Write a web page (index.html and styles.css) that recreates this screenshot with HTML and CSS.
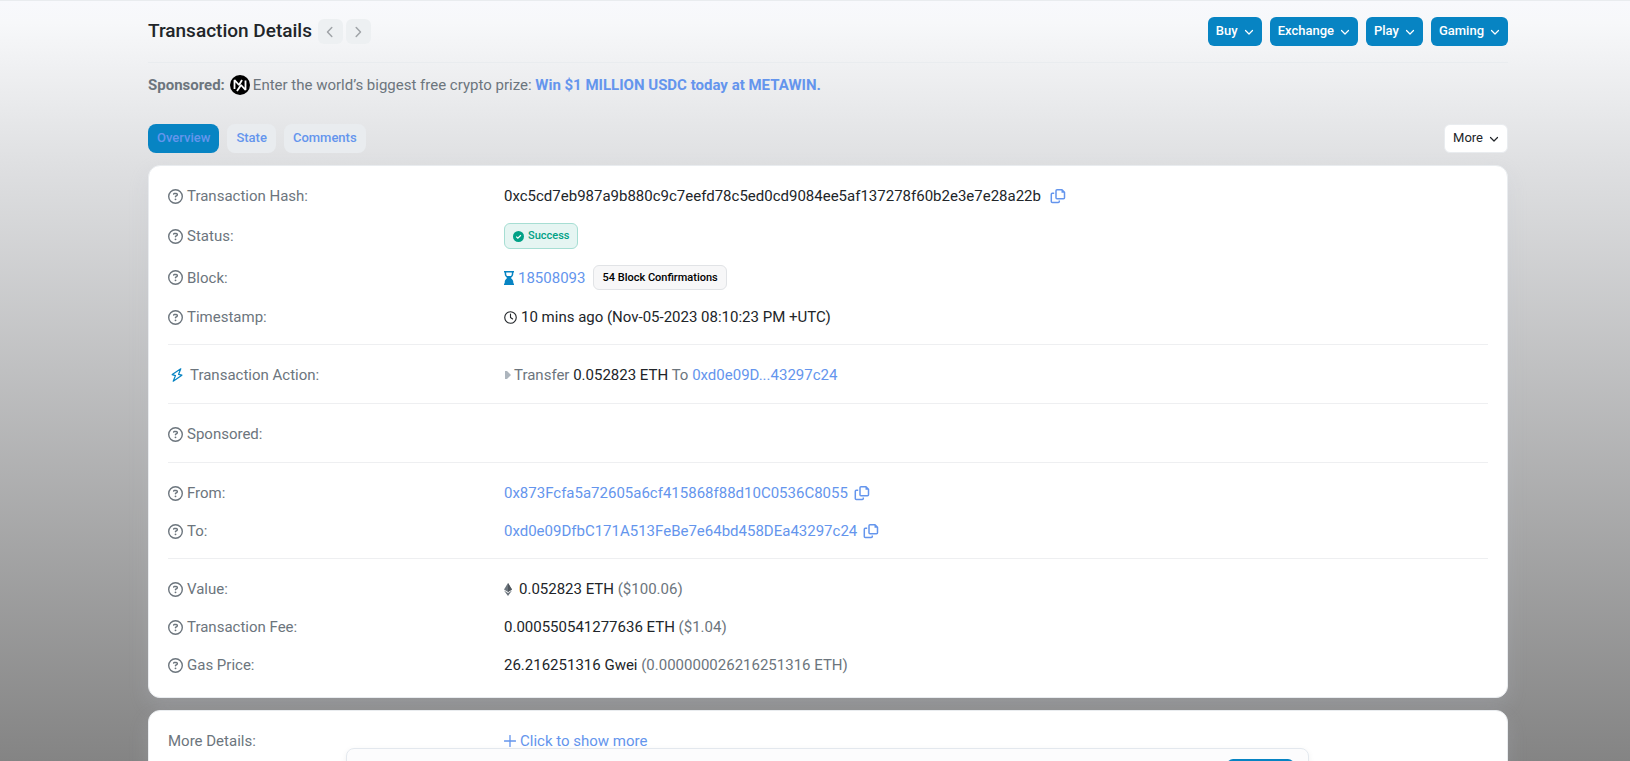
FILE: index.html
```
<!DOCTYPE html>
<html lang="en">
<head>
<meta charset="utf-8">
<title>Transaction Details</title>
<link rel="stylesheet" href="styles.css">
</head>
<body>
<svg class="sprite" aria-hidden="true">
  <symbol id="help" viewBox="0 0 512 512"><path fill="currentColor" d="M464 256A208 208 0 1 0 48 256a208 208 0 1 0 416 0zM0 256a256 256 0 1 1 512 0A256 256 0 1 1 0 256zm169.800-90.700c7.900-22.300 29.100-37.300 52.800-37.300h58.300c34.900 0 63.100 28.300 63.100 63.100c0 22.600-12.100 43.500-31.700 54.800L280 264.400c-.2 13-10.900 23.600-24 23.600c-13.300 0-24-10.700-24-24V250.500c0-8.600 4.600-16.500 12.100-20.800l44.300-25.400c4.700-2.700 7.600-7.700 7.600-13.100c0-8.400-6.800-15.100-15.100-15.100H222.600c-3.400 0-6.400 2.100-7.500 5.300l-.4 1.200c-4.400 12.500-18.200 19-30.600 14.600s-19-18.200-14.600-30.600l.4-1.200zM224 352a32 32 0 1 1 64 0 32 32 0 1 1 -64 0z"/></symbol>
  <symbol id="chevron" viewBox="0 0 10 10"><path d="M1.500 3.500 5 7l3.500-3.500" fill="none" stroke="currentColor" stroke-width="1.200" stroke-linecap="round" stroke-linejoin="round"/></symbol>
  <symbol id="copy" viewBox="0 0 16 16"><g fill="none" stroke="currentColor" stroke-width="1.500" stroke-linejoin="round"><path d="M7 1.700h5l2.500 2.500v5.600a1 1 0 0 1-1 1H7a1 1 0 0 1-1-1V2.700a1 1 0 0 1 1-1z"/><path d="M4.200 5.200H2.300a1 1 0 0 0-1 1v7.300a1 1 0 0 0 1 1h6a1 1 0 0 0 1-1v-1"/></g><path d="M11.500 1.500v3.200h3.200z" fill="currentColor"/></symbol>
</svg>
<div class="page">
  <header class="header">
    <h1 class="title">Transaction Details</h1>
    <div class="pager">
      <button class="pager-btn" aria-label="Previous transaction"><svg viewBox="0 0 12 12"><path d="M7.800 1.500 3.500 6l4.300 4.500"/></svg></button>
      <button class="pager-btn" aria-label="Next transaction"><svg viewBox="0 0 12 12"><path d="M4.200 1.500 8.500 6l-4.300 4.500"/></svg></button>
    </div>
    <div class="actions">
      <button class="btn btn-primary">Buy <svg class="chev"><use href="#chevron"/></svg></button>
      <button class="btn btn-primary">Exchange <svg class="chev"><use href="#chevron"/></svg></button>
      <button class="btn btn-primary">Play <svg class="chev"><use href="#chevron"/></svg></button>
      <button class="btn btn-primary">Gaming <svg class="chev"><use href="#chevron"/></svg></button>
    </div>
  </header>

  <p class="ad">
    <strong>Sponsored:</strong>
    <svg class="ad-logo" viewBox="0 0 20 20" aria-hidden="true"><circle cx="10" cy="10" r="10" fill="#000"/><g fill="none" stroke="#fff" stroke-width="1.800" stroke-linejoin="bevel"><path d="M4.500 14V5l4.500 5 3-5"/><path d="M15.500 5.500v9.500l-4.500-5-4 6"/></g></svg>
    <span>Enter the world’s biggest free crypto prize: <a href="#"><strong>Win $1 MILLION USDC today at METAWIN.</strong></a></span>
  </p>

  <nav class="tabs">
    <a class="tab tab-active" href="#">Overview</a>
    <a class="tab" href="#">State</a>
    <a class="tab" href="#">Comments</a>
    <button class="btn btn-white">More <svg class="chev"><use href="#chevron"/></svg></button>
  </nav>

  <main>
    <section class="card">
      <dl class="group">
        <div class="row"><dt><svg class="help"><use href="#help"/></svg>Transaction Hash:</dt><dd>0xc5cd7eb987a9b880c9c7eefd78c5ed0cd9084ee5af137278f60b2e3e7e28a22b<button class="copy copy-wide" aria-label="Copy hash"><svg><use href="#copy"/></svg></button></dd></div>
        <div class="row row-status"><dt><svg class="help"><use href="#help"/></svg>Status:</dt><dd><span class="badge badge-success"><svg class="check" viewBox="0 0 12 12"><circle cx="6" cy="6" r="6" fill="currentColor"/><path d="M3.500 6.100 5.300 7.900 8.600 4.600" fill="none" stroke="#fff" stroke-width="1.300"/></svg>Success</span></dd></div>
        <div class="row row-block"><dt><svg class="help"><use href="#help"/></svg>Block:</dt><dd><svg class="hourglass" viewBox="0 0 10 14"><path fill="currentColor" d="M0 0h10v1.600H9.300V3c0 1.800-1.300 3-2.500 4 1.200 1 2.500 2.200 2.500 4v1.400H10V14H0v-1.600h.7V11c0-1.800 1.300-3 2.500-4C2 6 .7 4.800 .7 3V1.600H0zm2.200 1.600V3c0 .8.300 1.400.8 2h4c.5-.6.8-1.200.8-2V1.600z"/></svg><a href="#">18508093</a><span class="badge badge-grey">54 Block Confirmations</span></dd></div>
        <div class="row"><dt><svg class="help"><use href="#help"/></svg>Timestamp:</dt><dd><svg class="clock" viewBox="0 0 14 14"><g fill="none" stroke="currentColor" stroke-width="1.200" stroke-linecap="round" stroke-linejoin="round"><circle cx="7" cy="7" r="6.200"/><path d="M7 3.300V7l2.300 1.600"/></g></svg>10 mins ago (Nov-05-2023 08:10:23 PM +UTC)</dd></div>
      </dl>
      <dl class="group">
        <div class="row row-single"><dt><svg class="bolt" viewBox="0 0 12 14"><path d="M9.800.8 1.200 6.600l3.300 1L2.200 13.200 10.900 7.200 7.600 6.300z" fill="none" stroke="currentColor" stroke-width="1.200" stroke-linejoin="round"/></svg>Transaction Action:</dt><dd><svg class="caret" viewBox="0 0 6 8"><path d="M0 0h2l4 4-4 4H0z" fill="currentColor"/></svg><span><span class="muted">Transfer</span> 0.052823 ETH <span class="muted">To</span> <a href="#">0xd0e09D...43297c24</a></span></dd></div>
      </dl>
      <dl class="group">
        <div class="row row-single"><dt><svg class="help"><use href="#help"/></svg>Sponsored:</dt><dd></dd></div>
      </dl>
      <dl class="group">
        <div class="row"><dt><svg class="help"><use href="#help"/></svg>From:</dt><dd><a href="#">0x873Fcfa5a72605a6cf415868f88d10C0536C8055</a><button class="copy" aria-label="Copy sender"><svg><use href="#copy"/></svg></button></dd></div>
        <div class="row"><dt><svg class="help"><use href="#help"/></svg>To:</dt><dd><a href="#">0xd0e09DfbC171A513FeBe7e64bd458DEa43297c24</a><button class="copy" aria-label="Copy recipient"><svg><use href="#copy"/></svg></button></dd></div>
      </dl>
      <dl class="group">
        <div class="row"><dt><svg class="help"><use href="#help"/></svg>Value:</dt><dd><svg class="eth" viewBox="0 0 8 13"><path d="M4 0 8 6.600 4 9 0 6.600z" fill="#6c757d"/><path d="M4 0v9l4-2.400z" fill="#50575e"/><path d="M0 7.600 4 10l4-2.400L4 13z" fill="#6c757d"/></svg><span>0.052823 ETH <span class="muted">($100.06)</span></span></dd></div>
        <div class="row"><dt><svg class="help"><use href="#help"/></svg>Transaction Fee:</dt><dd><span>0.000550541277636 ETH <span class="muted">($1.04)</span></span></dd></div>
        <div class="row"><dt><svg class="help"><use href="#help"/></svg>Gas Price:</dt><dd><span>26.216251316 Gwei <span class="muted">(0.000000026216251316 ETH)</span></span></dd></div>
      </dl>
    </section>
    <section class="card">
      <dl class="group">
        <div class="row"><dt>More Details:</dt><dd><a class="show-more" href="#"><svg class="plus" viewBox="0 0 12 12"><path d="M6 .5v11M.5 6h11" stroke="currentColor" stroke-width="1.300" stroke-linecap="round"/></svg>Click to show more</a></dd></div>
      </dl>
    </section>
  </main>
</div>
<aside class="notice" aria-label="Notice"><button class="notice-btn" aria-label="Accept"></button></aside>
</body>
</html>
```
FILE: styles.css
```
* { box-sizing: border-box; }
html { height: 100%; overflow: hidden; }
body {
  height: 100%;
  margin: 0;
  padding: 0 0 0 26px;
  overflow: hidden;
  border-top: 1px solid #e9ecef;
  background: linear-gradient(180deg, #f8f9fd 0, #f7f8fa 3%, #dedfe1 22%, #848484 100%) no-repeat;
  color: #212529;
  font: 15px/22px Roboto, "Liberation Sans", sans-serif;
}
.sprite { position: absolute; width: 0; height: 0; }
a { color: #6495ed; text-decoration: none; }
button { font-family: inherit; cursor: pointer; }
svg { display: block; flex: none; }

.page { max-width: 1360px; margin: 0 auto; }
.header {
  display: flex;
  align-items: center;
  height: 62px;
  border-bottom: 1px solid #e9ecef;
}
.title { margin: 0; padding-bottom: 2px; font-size: 19px; font-weight: 500; line-height: 24px; }
.pager { display: flex; gap: 3px; margin-left: 6px; }
.pager-btn {
  display: flex;
  align-items: center;
  justify-content: center;
  width: 25px;
  height: 25px;
  padding: 0;
  border: 0;
  border-radius: 6px;
  background: #edf0f2;
  color: #a0a4a8;
}
.pager-btn svg { width: 12px; height: 12px; }
.pager-btn path { fill: none; stroke: currentColor; stroke-width: 1.500; stroke-linecap: round; stroke-linejoin: round; }
.actions { display: flex; gap: 8px; margin-left: auto; }
.btn {
  display: flex;
  align-items: center;
  gap: 6px;
  height: 29px;
  padding: 0 8px 2px;
  border: 0;
  border-radius: 6px;
  font-size: 13px;
  font-weight: 500;
  line-height: 20px;
}
.btn-primary { background: #0784c3; color: #fff; }
.chev { width: 10px; height: 10px; margin-top: 3px; }

.ad { display: flex; align-items: center; margin: 11px 0 28px; color: #6c757d; }
.ad strong { font-weight: 700; }
.ad-logo { width: 20px; height: 20px; margin: 0 3px 0 5px; }

.tabs { display: flex; align-items: center; gap: 8px; margin-bottom: 12px; }
.tab {
  height: 29px;
  padding: 4px 9px;
  border-radius: 8px;
  background: #e9ecef;
  font-size: 13px;
  font-weight: 500;
  line-height: 20px;
}
.tab-active { background: #0784c3; }
.btn-white {
  margin-left: auto;
  border: 1px solid #e9ecef;
  background: #fff;
  color: #212529;
  font-weight: 400;
}

.card {
  margin-bottom: 12px;
  padding: 19px 19px 21px;
  border: 1px solid #e9ecef;
  border-radius: 12px;
  background: #fff;
  box-shadow: 0 8px 19px rgba(189, 197, 209, 0.2);
}
.group { display: flex; flex-direction: column; gap: 16px; margin: 0; }
.group + .group { margin-top: 16px; padding-top: 19px; border-top: 1px solid #eeeff1; }
.row { display: grid; grid-template-columns: 1fr 3fr; column-gap: 8px; align-items: center; min-height: 22px; }
.row-status { height: 26px; }
.row-block { height: 25px; }
.row-single { min-height: 23px; align-items: start; }
dt, dd { display: flex; align-items: center; margin: 0; }
dt { color: #6c757d; }
.muted { color: #6c757d; }
.help { width: 15px; height: 15px; margin-right: 4px; }
.copy { margin-left: 6px; padding: 0; border: 0; background: none; color: #6495ed; }
.copy-wide { margin-left: 9px; }
.copy svg { width: 16px; height: 16px; }
.badge {
  display: flex;
  align-items: center;
  padding: 0 8px;
  border: 1px solid #e1e3e6;
  border-radius: 6px;
  font-size: 11px;
  font-weight: 500;
  line-height: 23px;
}
.badge-success { border-color: #a6ded3; background: #e5f5f2; color: #00a186; line-height: 24px; }
.badge-grey { margin-left: 8px; background: #f7f7f8; color: #000; }
.check { width: 11px; height: 11px; margin-right: 4px; }
.hourglass { width: 10px; height: 14px; margin-right: 4px; color: #0784c3; }
.clock { width: 13px; height: 13px; margin-right: 4px; }
.bolt { width: 12px; height: 14px; margin: 0 7px 0 3px; color: #0784c3; }
.caret { width: 6px; height: 8px; margin: 0 3px 0 1px; color: #adb5bd; }
.eth { width: 8px; height: 13px; margin-right: 7px; }
.show-more { display: flex; align-items: center; }
.plus { width: 12px; height: 12px; margin-right: 4px; }

.notice {
  position: fixed;
  top: 748px;
  left: 346px;
  right: 321px;
  height: 60px;
  display: flex;
  justify-content: flex-end;
  padding: 10px 14px;
  border: 1px solid #e3e8ee;
  border-radius: 8px;
  background: #fcfcfd;
  box-shadow: 0 2px 6px rgba(0, 0, 0, 0.06);
}
.notice-btn { width: 67px; height: 32px; padding: 0; border: 0; border-radius: 6px; background: #0784c3; }
```
